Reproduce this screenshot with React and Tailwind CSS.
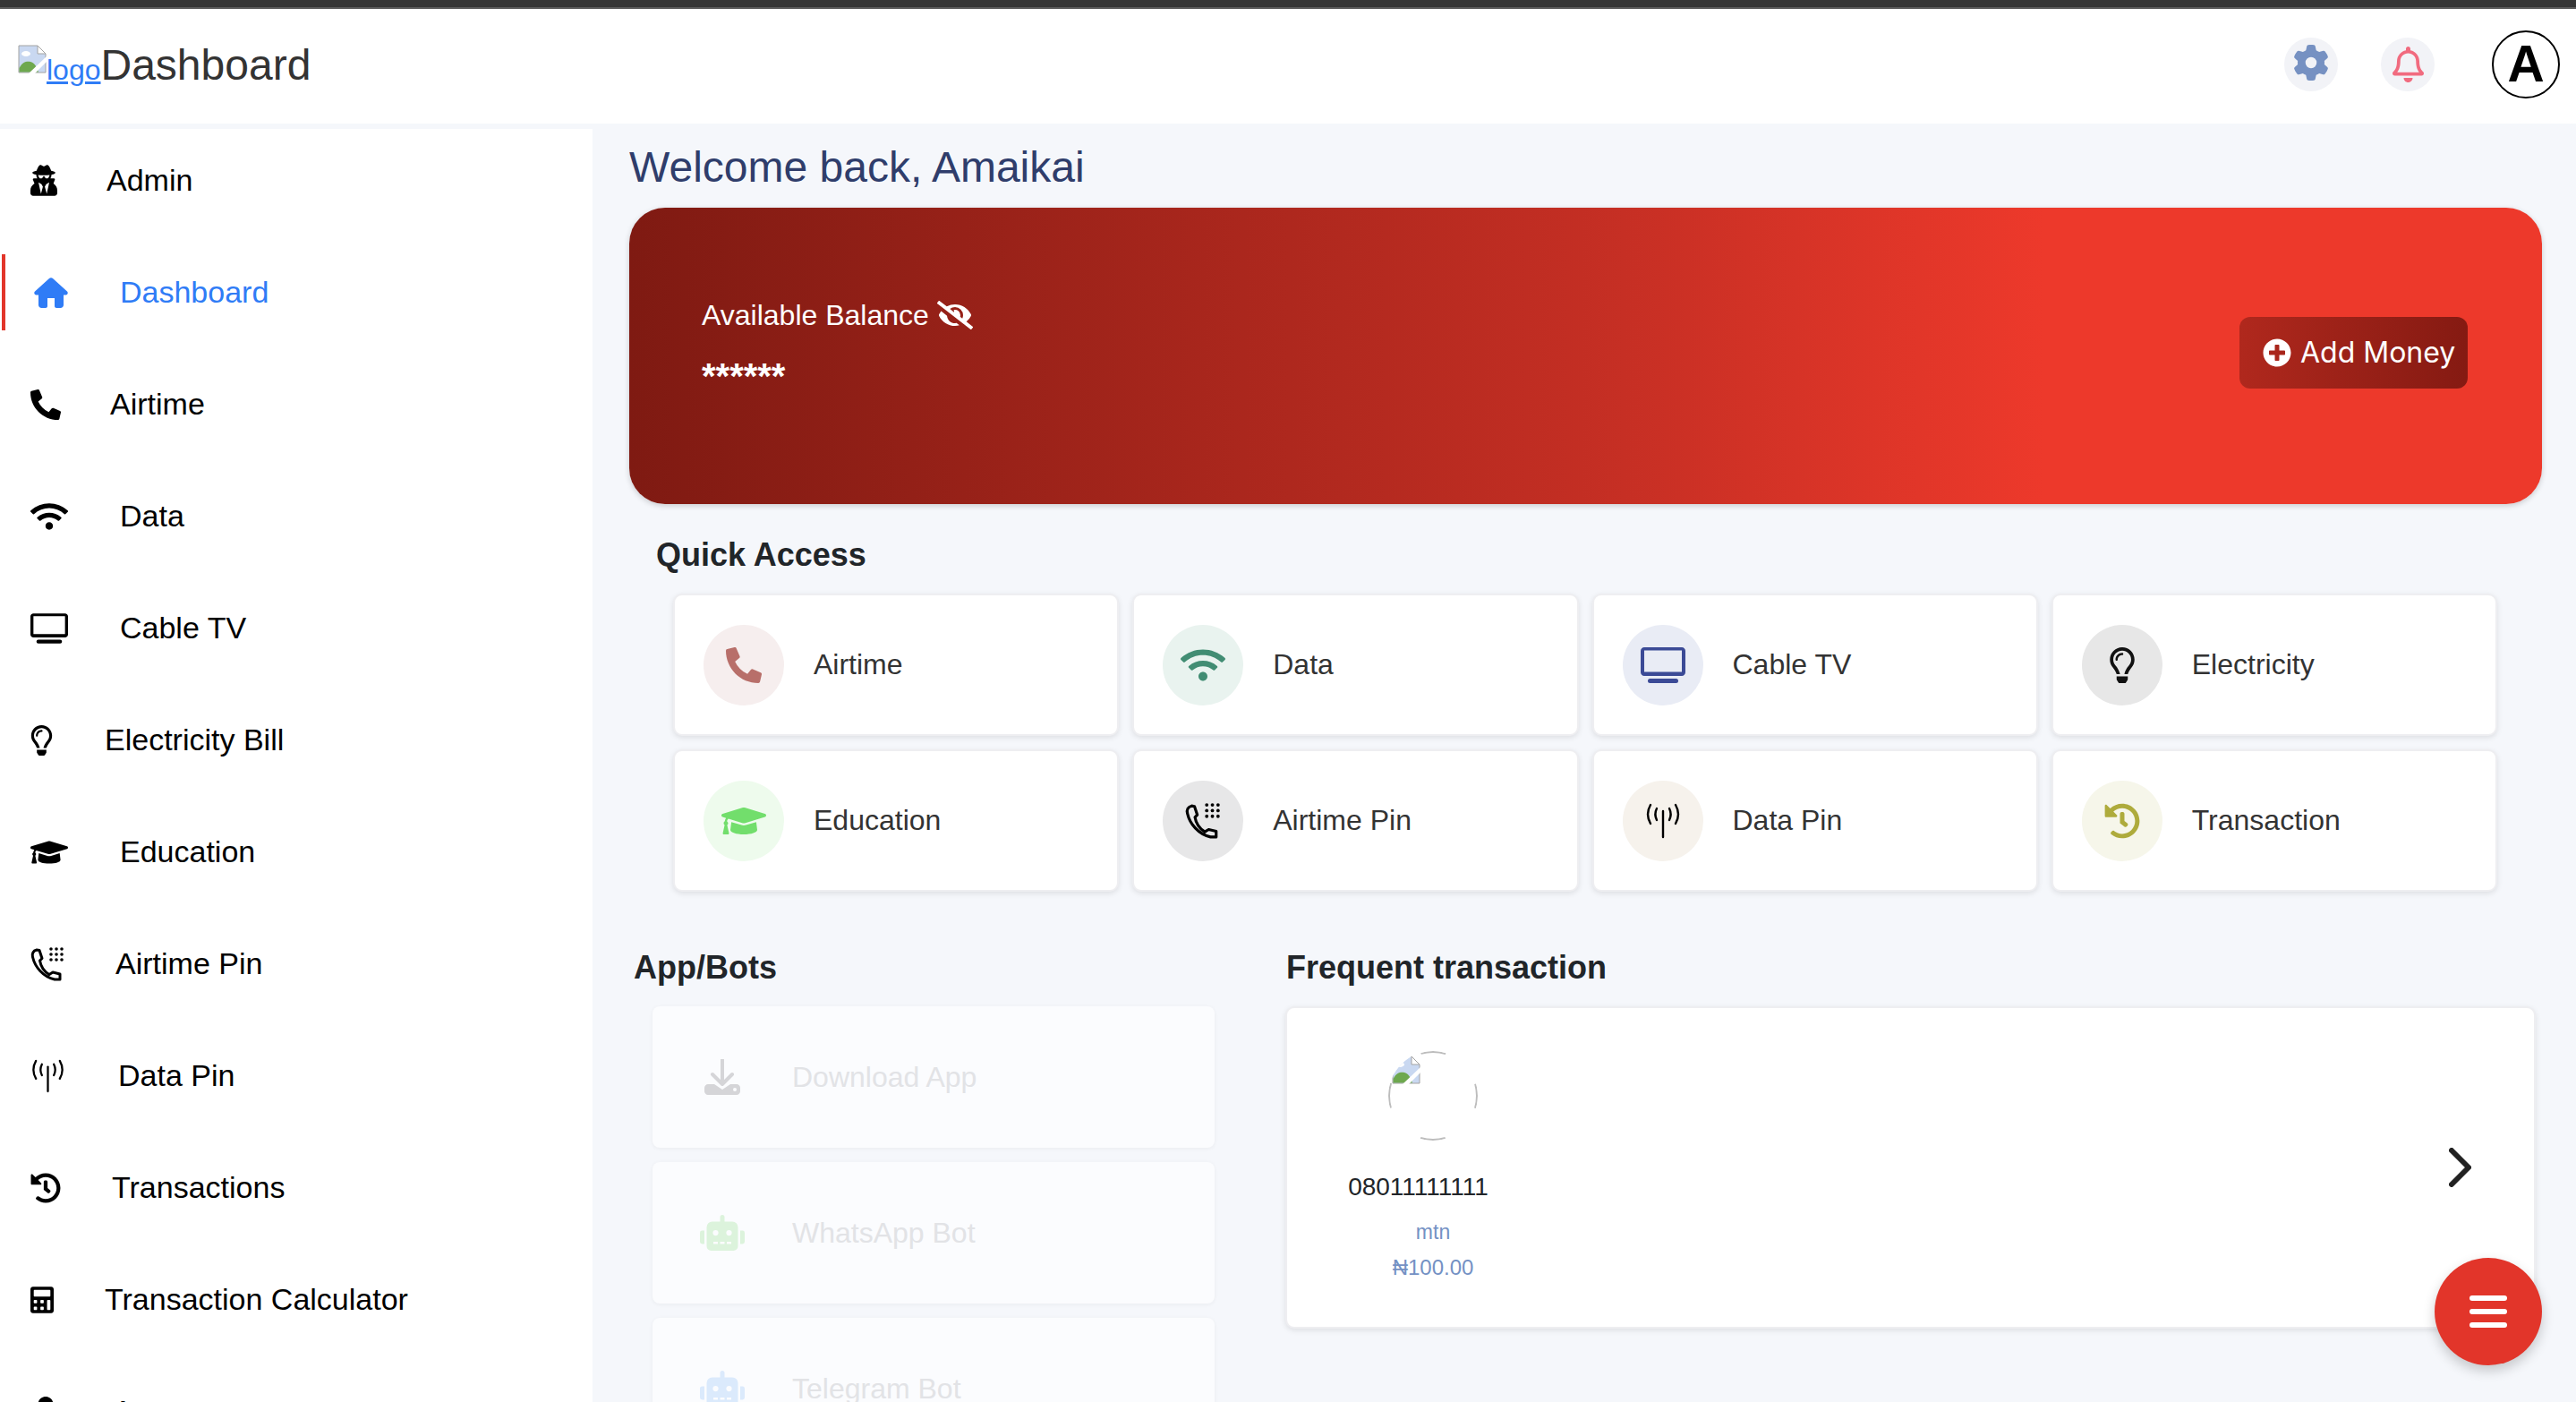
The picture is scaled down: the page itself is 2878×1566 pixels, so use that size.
import { FaUserSecret, FaPhoneAlt, FaWifi, FaRegLightbulb, FaGraduationCap, FaHistory, FaCalculator, FaUser, FaRegBell, FaEyeSlash, FaPlusCircle, FaRobot } from "react-icons/fa";
import { FaGear } from "react-icons/fa6";

const BrokenImage = ({ className }) => (
  <svg viewBox="0 0 32 32" className={className}>
    <path d="M1 1H22L31 10V31H1Z" fill="#c9d8f1" stroke="#a3a3a3" strokeWidth="1" />
    <path d="M22 1V10H31Z" fill="#fff" stroke="#a3a3a3" strokeWidth="1" />
    <ellipse cx="9" cy="10" rx="5" ry="3" fill="#fff" />
    <path d="M1.5 30.5V26C5 19 10 18 14 19C18 20 21 24 23 30.5Z" fill="#6ea84f" />
    <path d="M11 33L32 13V19L18 33Z" fill="#fff" />
  </svg>
);

const HomeIcon = ({ className }) => (
  <svg viewBox="0 0 38 34" fill="currentColor" className={className}>
    <path d="M17 1L1 15.5C-.5 17 .5 19.5 2.5 19.5H5V30.5C5 32.5 6.5 34 8.5 34H13C14 34 15 33 15 32V23H23V32C23 33 24 34 25 34H29.5C31.5 34 33 32.5 33 30.5V19.5H35.5C37.5 19.5 38.5 17 37 15.5L21 1C20 0 18 0 17 1Z" />
  </svg>
);

const TvIcon = ({ className }) => (
  <svg viewBox="0 0 50 40" fill="currentColor" className={className}>
    <path fillRule="evenodd" d="M4 0H46C48.2 0 50 1.8 50 4V28C50 30.2 48.2 32 46 32H4C1.8 32 0 30.2 0 28V4C0 1.8 1.8 0 4 0ZM4 3.5V27.5H46V3.5Z" />
    <rect x="8" y="35" width="34" height="5" rx="2.5" />
  </svg>
);

const DialIcon = ({ className }) => (
  <svg viewBox="0 0 38 38" className={className}>
    <path d="M7 3C3 4 1.5 7 2.5 11C5 22 14 33 27 36L33 36V30L25 28L21 30.5C15 27 11.5 21 10.5 15L13 12.5L10 3.5Z" fill="none" stroke="currentColor" strokeWidth="3" strokeLinejoin="round" />
    <g fill="currentColor">
      <circle cx="23" cy="2" r="1.8" /><circle cx="29" cy="2" r="1.8" /><circle cx="35" cy="2" r="1.8" />
      <circle cx="23" cy="8" r="1.8" /><circle cx="29" cy="8" r="1.8" /><circle cx="35" cy="8" r="1.8" />
      <circle cx="23" cy="14" r="1.8" /><circle cx="29" cy="14" r="1.8" /><circle cx="35" cy="14" r="1.8" />
    </g>
  </svg>
);

const TowerIcon = ({ className }) => (
  <svg viewBox="0 0 40 40" fill="none" stroke="currentColor" strokeWidth="2.4" strokeLinecap="round" className={className}>
    <path d="M20 9V38" />
    <path d="M13 6C11 10 11 15 13 19" />
    <path d="M27 6C29 10 29 15 27 19" />
    <path d="M6 2C2 9 2 16 6 23" />
    <path d="M34 2C38 9 38 16 34 23" />
  </svg>
);

const DownloadIcon = ({ className }) => (
  <svg viewBox="0 0 40 40" className={className}>
    <path d="M20 1V27M9 17L20 28L31 17" fill="none" stroke="currentColor" strokeWidth="4" strokeLinecap="round" strokeLinejoin="round" />
    <path d="M4 28H11L20 34L29 28H36C38 28 40 30 40 32V36C40 38 38 40 36 40H4C2 40 0 38 0 36V32C0 30 2 28 4 28Z" fill="currentColor" />
    <circle cx="34" cy="34" r="2" fill="#fbfcfe" />
  </svg>
);

// width of the icon slot varies per row because the text follows the glyph width
const menu = [
  { label: "Admin", icon: <FaUserSecret className="w-[30px] h-[35px]" />, slot: "w-[85px]" },
  { label: "Dashboard", icon: <HomeIcon className="w-[38px] h-[34px]" />, slot: "w-[96px]", active: true },
  { label: "Airtime", icon: <FaPhoneAlt className="w-[34px] h-[34px]" />, slot: "w-[89px]" },
  { label: "Data", icon: <FaWifi className="w-[42px] h-[34px]" />, slot: "w-[100px]" },
  { label: "Cable TV", icon: <TvIcon className="w-[42px] h-[34px]" />, slot: "w-[100px]" },
  { label: "Electricity Bill", icon: <FaRegLightbulb className="w-[25px] h-[34px]" />, slot: "w-[83px]" },
  { label: "Education", icon: <FaGraduationCap className="w-[42px] h-[34px]" />, slot: "w-[100px]" },
  { label: "Airtime Pin", icon: <DialIcon className="w-[38px] h-[38px]" />, slot: "w-[95px]" },
  { label: "Data Pin", icon: <TowerIcon className="w-[39px] h-[38px]" />, slot: "w-[98px]" },
  { label: "Transactions", icon: <FaHistory className="w-[34px] h-[34px]" />, slot: "w-[91px]" },
  { label: "Transaction Calculator", icon: <FaCalculator className="w-[26px] h-[34px]" />, slot: "w-[83px]" },
  { label: "Account", icon: <FaUser className="w-[34px] h-[34px]" />, slot: "w-[92px]" },
];

const quick = [
  { label: "Airtime", bg: "bg-[#f6eeee]", icon: <FaPhoneAlt className="w-[40px] h-[40px] text-[#b86f6a]" /> },
  { label: "Data", bg: "bg-[#e9f3ef]", icon: <FaWifi className="w-[50px] h-[40px] text-[#418d73]" /> },
  { label: "Cable TV", bg: "bg-[#e9ecf5]", icon: <TvIcon className="w-[50px] h-[40px] text-[#3b4a96]" /> },
  { label: "Electricity", bg: "bg-[#e7e7e7]", icon: <FaRegLightbulb className="w-[28px] h-[40px] text-[#111]" /> },
  { label: "Education", bg: "bg-[#eefbed]", icon: <FaGraduationCap className="w-[50px] h-[40px] text-[#72de6c]" /> },
  { label: "Airtime Pin", bg: "bg-[#e7e7e8]", icon: <DialIcon className="w-[40px] h-[40px] text-[#000]" /> },
  { label: "Data Pin", bg: "bg-[#f6f2ec]", icon: <TowerIcon className="w-[40px] h-[40px] text-[#000]" /> },
  { label: "Transaction", bg: "bg-[#f6f6ea]", icon: <FaHistory className="w-[40px] h-[40px] text-[#aeab3c]" /> },
];

const bots = [
  { label: "Download App", icon: <DownloadIcon className="w-[40px] h-[40px] text-[#d5d5d8]" /> },
  { label: "WhatsApp Bot", icon: <FaRobot className="w-[50px] h-[40px] text-[#dcf3dc]" /> },
  { label: "Telegram Bot", icon: <FaRobot className="w-[50px] h-[40px] text-[#dbeafc]" /> },
];

const App = () => {
  return (
    <div className="h-screen overflow-hidden flex flex-col bg-[#f5f7fb] font-['Liberation_Sans',sans-serif] relative">
      <div className="h-[10px] shrink-0 bg-[#363636] border-b-2 border-[#5c5c5c]" />

      <header className="h-[128px] shrink-0 bg-white flex items-center justify-between pl-[20px] pr-[18px]">
        <div className="flex items-baseline text-[48px] leading-[56px] text-[#333] -mt-[2px]">
          <BrokenImage className="w-[32px] h-[32px] -translate-y-[7px]" />
          <a className="text-[32px] leading-[40px] text-[#2f7cf6] underline">logo</a>
          <span>Dashboard</span>
        </div>
        <div className="flex items-center -mt-[4px]">
          <div className="w-[60px] h-[60px] rounded-full bg-[#f2f3f7] flex items-center justify-center">
            <FaGear className="w-[40px] h-[40px] text-[#7691c2] -mt-[4px]" />
          </div>
          <div className="w-[60px] h-[60px] ml-[48px] rounded-full bg-[#f2f3f7] flex items-center justify-center">
            <FaRegBell className="w-[35px] h-[40px] text-[#f16b7f]" />
          </div>
          <div className="w-[76px] h-[76px] ml-[64px] rounded-full border-2 border-black flex items-center justify-center text-[57px] font-bold text-black">A</div>
        </div>
      </header>

      <div className="flex-1 flex min-h-0">
        <aside className="w-[662px] shrink-0 mt-[6px] bg-white pt-[15px] pl-[2px] flex flex-col gap-[40px] text-[34px] text-black">
          {menu.map(m => (
            <div key={m.label} className={`h-[85px] shrink-0 flex items-center ${m.active ? "border-l-4 border-[#e2352a] pl-[32px] text-[#2f7cf6]" : "pl-[32px]"}`}>
              <span className={`${m.slot} shrink-0 flex`}>{m.icon}</span>
              <span>{m.label}</span>
            </div>
          ))}
        </aside>

        <main className="flex-1 min-w-0 pl-[41px] pr-[38px] pt-[20px]">
          <h1 className="text-[48px] leading-[58px] text-[#2f3d6b] mb-[16px]">Welcome back, Amaikai</h1>

          <section className="h-[331px] rounded-[40px] flex items-center justify-between pl-[81px] pr-[83px] bg-[linear-gradient(to_right,#7f1a12_0%,#c62f24_52%,#ed392b_74%)] shadow-[0_2px_6px_rgba(0,0,0,0.18)]">
            <div className="text-white -mt-[23px]">
              <div className="flex items-center text-[32px] leading-[40px]">
                Available Balance
                <FaEyeSlash className="w-[40px] h-[32px] ml-[9px]" />
              </div>
              <div className="text-[40px] leading-[40px] font-bold mt-[28px]">******</div>
            </div>
            <button className="w-[255px] h-[80px] -mt-[8px] rounded-[12px] bg-gradient-to-r from-[#b0281d] to-[#851a12] flex items-center pl-[26px] text-white font-['Inter',sans-serif] text-[32px]">
              <FaPlusCircle className="w-[32px] h-[32px] mr-[10px]" />
              Add Money
            </button>
          </section>

          <h2 className="text-[36px] leading-[44px] font-bold text-[#212529] ml-[30px] mt-[35px] mb-[21px]">Quick Access</h2>
          <div className="grid grid-cols-4 gap-x-[15px] gap-y-[15px] ml-[49px] w-[2038px]">
            {quick.map(q => (
              <div key={q.label} className="h-[159px] rounded-[10px] bg-white border-2 border-[#eeeef1] shadow-[0_2px_6px_rgba(0,0,0,0.1)] flex items-center pl-[32px] text-[32px] text-[#333]">
                <span className={`w-[90px] h-[90px] rounded-full shrink-0 flex items-center justify-center ${q.bg}`}>{q.icon}</span>
                <span className="ml-[33px] -mt-[2px]">{q.label}</span>
              </div>
            ))}
          </div>

          <div className="flex mt-[63px]">
            <div className="w-[733px] shrink-0 pl-[5px]">
              <h2 className="text-[36px] leading-[44px] font-bold text-[#212529] mb-[21px]">App/Bots</h2>
              <div className="flex flex-col gap-[16px] ml-[21px] w-[628px]">
                {bots.map(b => (
                  <div key={b.label} className="h-[158px] shrink-0 rounded-[8px] bg-[#fbfcfe] shadow-[0_1px_5px_rgba(0,0,0,0.05)] flex items-center text-[32px] text-[#e2e3e6]">
                    <span className="w-[50px] ml-[53px] flex justify-center">{b.icon}</span>
                    <span className="ml-[53px]">{b.label}</span>
                  </div>
                ))}
              </div>
            </div>

            <div className="flex-1 min-w-0 pr-[7px]">
              <h2 className="text-[36px] leading-[44px] font-bold text-[#212529] mb-[21px] pl-[1px]">Frequent transaction</h2>
              <div className="h-[360px] rounded-[10px] bg-white border-2 border-[#eeeef1] shadow-[0_2px_6px_rgba(0,0,0,0.1)] flex items-center justify-between pr-[70px]">
                <div className="self-start pt-[48px] ml-[113px] flex flex-col items-center w-[100px]">
                  <div className="w-[100px] h-[100px] rounded-full overflow-hidden relative">
                    <BrokenImage className="w-[32px] h-[32px] ml-[4px] mt-[5px]" />
                    <svg viewBox="0 0 100 100" className="absolute inset-0 w-[100px] h-[100px]">
                      <circle cx="50" cy="50" r="49" fill="none" stroke="#bdbdbd" strokeWidth="2" strokeDasharray="28 48.97" strokeDashoffset="14" />
                    </svg>
                  </div>
                  <div className="text-[28px] leading-[32px] text-[#212529] mt-[36px] mr-[33px] whitespace-nowrap">08011111111</div>
                  <div className="text-[23px] leading-[28px] text-[#7491c4] mt-[20px]">mtn</div>
                  <div className="text-[24px] leading-[28px] text-[#7491c4] mt-[12px] whitespace-nowrap">₦100.00</div>
                </div>
                <svg viewBox="0 0 25 44" className="w-[25px] h-[44px] -mt-[1px]" fill="none" stroke="#222" strokeWidth="6" strokeLinecap="round" strokeLinejoin="round">
                  <path d="M3 3L22 22L3 41" />
                </svg>
              </div>
            </div>
          </div>
        </main>
      </div>

      <button className="absolute right-[38px] bottom-[41px] w-[120px] h-[120px] rounded-full bg-[#e2352a] shadow-[0_6px_14px_rgba(0,0,0,0.2)] flex flex-col items-center justify-center gap-[9px]">
        <span className="w-[42px] h-[6px] rounded-full bg-white" />
        <span className="w-[42px] h-[6px] rounded-full bg-white" />
        <span className="w-[42px] h-[6px] rounded-full bg-white" />
      </button>
    </div>
  );
};

export default App;
